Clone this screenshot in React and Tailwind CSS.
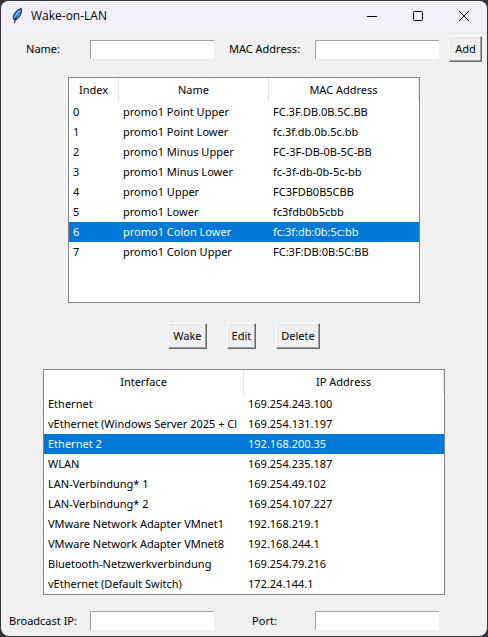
import { useState } from "react";

const hosts = [
  ["0", "promo1 Point Upper", "FC.3F.DB.0B.5C.BB"],
  ["1", "promo1 Point Lower", "fc.3f.db.0b.5c.bb"],
  ["2", "promo1 Minus Upper", "FC-3F-DB-0B-5C-BB"],
  ["3", "promo1 Minus Lower", "fc-3f-db-0b-5c-bb"],
  ["4", "promo1 Upper", "FC3FDB0B5CBB"],
  ["5", "promo1 Lower", "fc3fdb0b5cbb"],
  ["6", "promo1 Colon Lower", "fc:3f:db:0b:5c:bb"],
  ["7", "promo1 Colon Upper", "FC:3F:DB:0B:5C:BB"],
];

const interfaces = [
  ["Ethernet", "169.254.243.100"],
  ["vEthernet (Windows Server 2025 + Cl", "169.254.131.197"],
  ["Ethernet 2", "192.168.200.35"],
  ["WLAN", "169.254.235.187"],
  ["LAN-Verbindung* 1", "169.254.49.102"],
  ["LAN-Verbindung* 2", "169.254.107.227"],
  ["VMware Network Adapter VMnet1", "192.168.219.1"],
  ["VMware Network Adapter VMnet8", "192.168.244.1"],
  ["Bluetooth-Netzwerkverbindung", "169.254.79.216"],
  ["vEthernet (Default Switch)", "172.24.144.1"],
];

function Feather() {
  return (
    <svg viewBox="0 0 16 16" className="h-4 w-4" aria-hidden="true">
      <path
        d="M12.300 .6C9 1.200 5.500 4.200 4.500 7.800c-.4 1.600-.3 2.800.4 3.800l1.300 .5c2.500-.9 4.500-3.200 5.500-6 .8-2 1.100-4 .6-5.500Z"
        fill="#3f8fe8"
        stroke="#10141c"
        strokeWidth="1"
      />
      <path d="M11 2.500C8.500 4.500 6.700 7 5.900 10" fill="none" stroke="#a9d0f5" strokeWidth=".8" />
      <path d="M7.500 8.500C6.500 10 5.700 12 5.500 15.300" fill="none" stroke="#10141c" strokeWidth="1.100" />
    </svg>
  );
}

function TitleBar() {
  return (
    <header className="flex h-[30px] items-center bg-[#f3f0f9] pl-2 font-['Open_Sans',sans-serif] text-xs">
      <Feather />
      <h1 className="ml-1.5 flex-1">Wake-on-LAN</h1>
      <button type="button" aria-label="Minimize" className="flex h-full w-[46px] items-center justify-center">
        <svg viewBox="0 0 10 10" className="h-2.5 w-2.5" fill="none" stroke="#000">
          <path d="M0 5.500h10" />
        </svg>
      </button>
      <button type="button" aria-label="Maximize" className="flex h-full w-[46px] items-center justify-center">
        <svg viewBox="0 0 10 10" className="h-2.5 w-2.5" fill="none" stroke="#000">
          <rect x=".5" y=".5" width="9" height="9" rx="1" />
        </svg>
      </button>
      <button type="button" aria-label="Close" className="flex h-full w-[46px] items-center justify-center">
        <svg viewBox="0 0 10 10" className="h-2.5 w-2.5" fill="none" stroke="#000">
          <path d="M0 0l10 10M10 0L0 10" />
        </svg>
      </button>
    </header>
  );
}

function Field({ id, label }) {
  return (
    <>
      <label htmlFor={id} className="text-center whitespace-nowrap">
        {label}
      </label>
      <div className="px-[5px]">
        <input
          id={id}
          type="text"
          className="block h-[19px] w-full border-t border-l border-[#a0a0a0] bg-white px-0.5 outline-none"
        />
      </div>
    </>
  );
}

function PushButton({ children }) {
  return (
    <button
      type="button"
      className="h-[26px] border border-t-white border-r-[#696969] border-b-[#696969] border-l-white bg-[#f0f0f0] px-1 shadow-[inset_-1px_-1px_0_#a0a0a0,inset_1px_1px_0_#e3e3e3]"
    >
      {children}
    </button>
  );
}

function TreeView({ label, columns, rows, initial, className }) {
  const [selected, setSelected] = useState(initial);
  return (
    <div className={`h-[226px] max-w-full border border-[#828790] bg-white ${className}`}>
      <table aria-label={label} className="w-full table-fixed border-separate border-spacing-0">
        <thead>
          <tr className="h-6">
            {columns.map(([name, width]) => (
              <th key={name} scope="col" className={`border-r border-[#e5e5e5] p-0 font-normal ${width}`}>
                {name}
              </th>
            ))}
          </tr>
        </thead>
        <tbody>
          {rows.map((row, i) => (
            <tr
              key={row[0]}
              aria-selected={i === selected}
              onClick={() => setSelected(i)}
              className={i === selected ? "h-5 bg-[#0078d7] text-white" : "h-5"}
            >
              {row.map((cell) => (
                <td key={cell} className="p-0 px-1 leading-5">
                  <div className="overflow-hidden whitespace-nowrap">{cell}</div>
                </td>
              ))}
            </tr>
          ))}
        </tbody>
      </table>
    </div>
  );
}

export default function App() {
  return (
    <div className="min-h-screen bg-[#38353a] p-px font-['Noto_Sans',sans-serif] text-[11px] leading-4 text-black">
      <main className="overflow-hidden rounded-lg bg-[#f0f0f0]">
        <TitleBar />
        <form className="grid h-9 grid-cols-[84px_1fr_91px_1fr_43px] items-center">
          <Field id="name" label="Name:" />
          <Field id="mac" label="MAC Address:" />
          <div className="grid px-[5px]">
            <PushButton>Add</PushButton>
          </div>
        </form>
        <div className="flex flex-col items-center gap-5 pt-2.5">
          <TreeView
            label="Hosts"
            columns={[
              ["Index", "w-[50px]"],
              ["Name", "w-[150px]"],
              ["MAC Address", "w-[150px]"],
            ]}
            rows={hosts}
            initial={6}
            className="w-[352px]"
          />
          <div className="flex gap-5">
            <PushButton>Wake</PushButton>
            <PushButton>Edit</PushButton>
            <PushButton>Delete</PushButton>
          </div>
          <TreeView
            label="Network interfaces"
            columns={[
              ["Interface", "w-1/2"],
              ["IP Address", "w-1/2"],
            ]}
            rows={interfaces}
            initial={2}
            className="w-[402px]"
          />
        </div>
        <form className="grid grid-cols-[84px_1fr_91px_1fr_43px] items-center pt-4 pb-1.5">
          <Field id="broadcast" label="Broadcast IP:" />
          <Field id="port" label="Port:" />
        </form>
      </main>
    </div>
  );
}
